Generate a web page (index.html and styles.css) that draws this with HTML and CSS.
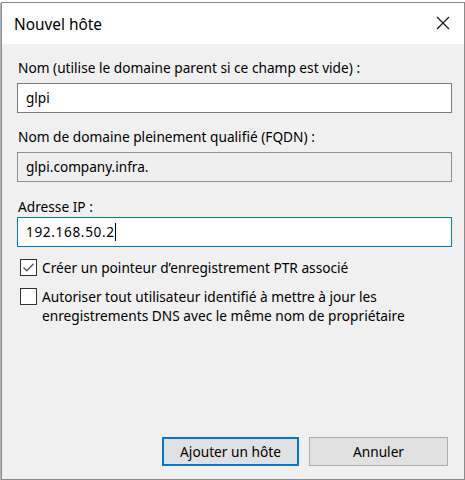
FILE: index.html
```html
<!DOCTYPE html>
<html lang="fr">
<head>
<meta charset="utf-8">
<title>Nouvel hôte</title>
<link rel="stylesheet" href="styles.css">
</head>
<body>
<div class="window">
  <div class="titlebar">
    <span class="title">Nouvel hôte</span>
    <svg class="close" width="14" height="14" viewBox="0 0 14 14"><path d="M1 1 L13 13 M13 1 L1 13" stroke="#1a1a1a" stroke-width="1.2" fill="none"/></svg>
  </div>
  <div class="content">
    <div class="label l1">Nom (utilise le domaine parent si ce champ est vide) :</div>
    <div class="field">glpi</div>
    <div class="label l2">Nom de domaine pleinement qualifié (FQDN) :</div>
    <div class="field readonly">glpi.company.infra.</div>
    <div class="label l3">Adresse IP :</div>
    <div class="field focused"><span class="ip">192.168.50.2</span><span class="caret"></span></div>
    <div class="check c1">
      <span class="box"><svg width="15" height="15" viewBox="0 0 15 15"><path d="M2.5 7.5 L5.8 10.8 L12.5 3.8" stroke="#555" stroke-width="1.3" fill="none"/></svg></span>
      <span class="ctext">Créer un pointeur d’enregistrement PTR associé</span>
    </div>
    <div class="check c2">
      <span class="box"></span>
      <span class="ctext">Autoriser tout utilisateur identifié à mettre à jour les<br>enregistrements DNS avec le même nom de propriétaire</span>
    </div>
    <div class="buttons">
      <div class="btn primary">Ajouter un hôte</div>
      <div class="btn">Annuler</div>
    </div>
  </div>
</div>
</body>
</html>
```
FILE: styles.css
```css
html, body {
  margin: 0;
  padding: 0;
  background: #ffffff;
}
body {
  font-family: "Noto Sans", "Open Sans", sans-serif;
  color: #000;
}
.window {
  box-sizing: border-box;
  margin: 2px 0 0 1px;
  width: 464px;
  height: 478px;
  border: 1px solid #8a8a8a;
  box-shadow: -1px 1px 0 #b4b4b4;
  display: flex;
  flex-direction: column;
  background: #f0f0f0;
}
.titlebar {
  height: 41px;
  flex: none;
  background: #fff;
  display: flex;
  align-items: center;
  justify-content: space-between;
  padding: 0 14px 0 12px;
}
.title {
  font-size: 15.4px;
  line-height: 20px;
  padding-top: 2px;
}
.close {
  display: block;
  margin-top: -1px;
}
.content {
  flex: 1;
  display: flex;
  flex-direction: column;
  padding: 14px 12px 13px 15px;
}
.label {
  font-size: 13.7px;
  line-height: 19px;
  padding-left: 1px;
}
.l1 { margin-bottom: 6px; }
.l2 { margin-top: 14px; margin-bottom: 6px; }
.l3 { margin-top: 15px; margin-bottom: 1px; }
.field {
  box-sizing: border-box;
  height: 30px;
  border: 1px solid #7a7a7a;
  background: #fff;
  font-size: 13.6px;
  line-height: 28px;
  padding-left: 8px;
  display: flex;
  align-items: center;
}
.field.readonly {
  background: #efefef;
  border-color: #8f8f8f;
}
.field.focused {
  border-color: #0078d7;
}
.ip {
  letter-spacing: 0.65px;
}
.caret {
  display: inline-block;
  width: 1px;
  height: 18px;
  background: #000;
  margin-left: 0;
}
.check {
  display: flex;
  align-items: flex-start;
  padding-left: 3px;
}
.c1 { margin-top: 11px; }
.c2 { margin-top: 10px; }
.box {
  box-sizing: border-box;
  flex: none;
  width: 17px;
  height: 17px;
  border: 1px solid #333;
  background: #fff;
  margin-top: 1px;
  margin-right: 5px;
  display: flex;
  align-items: center;
  justify-content: center;
}
.box svg { display: block; }
.ctext {
  font-size: 13.7px;
  line-height: 19px;
}
.buttons {
  margin-top: auto;
  display: flex;
  justify-content: flex-end;
  gap: 10px;
  padding-right: 4px;
}
.btn {
  box-sizing: border-box;
  height: 29px;
  background: #e1e1e1;
  border: 1px solid #adadad;
  font-size: 13.7px;
  display: flex;
  align-items: center;
  justify-content: center;
}
.btn.primary {
  width: 137px;
  border: 2px solid #0078d7;
}
.btn:not(.primary) {
  width: 139px;
}
```
